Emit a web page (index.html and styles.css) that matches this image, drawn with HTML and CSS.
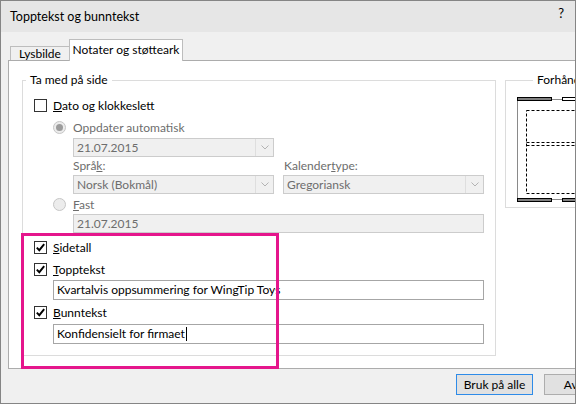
FILE: index.html
```html
<!DOCTYPE html>
<html lang="no">
<head>
<meta charset="utf-8">
<title>Topptekst og bunntekst</title>
<link rel="stylesheet" href="styles.css">
</head>
<body>
<div class="window">
  <header class="titlebar">
    <span class="title">Topptekst og bunntekst</span>
    <span class="help">?</span>
  </header>
  <div class="tabs">
    <div class="tab">Lysbilde</div>
    <div class="tab active">Notater og støtteark</div>
  </div>
  <div class="panel">
    <fieldset class="group include">
      <legend>Ta med på side</legend>
      <div class="group-body">
        <div class="row r-date"><span class="cb"></span><span class="lbl"><u>D</u>ato og klokkeslett</span></div>
        <div class="row r-auto indent1"><span class="radio on"></span><span class="lbl dis">Oppdater automatisk</span></div>
        <div class="combo c-date indent2"><span class="val">21.07.2015</span><span class="drop"><svg width="8" height="5" viewBox="0 0 8 5"><polyline points="0.5,0.5 4,4 7.5,0.5" fill="none" stroke="#b3b3b3" stroke-width="1"/></svg></span></div>
        <div class="pair labels indent2"><span class="dis">Språ<u>k</u>:</span><span class="dis">Kalender<u>t</u>ype:</span></div>
        <div class="pair combos indent2">
          <div class="combo"><span class="val">Norsk (Bokmål)</span><span class="drop"><svg width="8" height="5" viewBox="0 0 8 5"><polyline points="0.5,0.5 4,4 7.5,0.5" fill="none" stroke="#b3b3b3" stroke-width="1"/></svg></span></div>
          <div class="combo"><span class="val">Gregoriansk</span><span class="drop"><svg width="8" height="5" viewBox="0 0 8 5"><polyline points="0.5,0.5 4,4 7.5,0.5" fill="none" stroke="#b3b3b3" stroke-width="1"/></svg></span></div>
        </div>
        <div class="row r-fast indent1"><span class="radio"></span><span class="lbl dis"><u>F</u>ast</span></div>
        <div class="field disabled f-fast indent2">21.07.2015</div>
        <div class="row r-page"><span class="cb checked"><svg width="11" height="11" viewBox="0 0 11 11"><path d="M1.8 5.6 L4.3 8.2 L9.2 2.2" fill="none" stroke="#000" stroke-width="1.9"/></svg></span><span class="lbl"><u>S</u>idetall</span></div>
        <div class="row r-header"><span class="cb checked"><svg width="11" height="11" viewBox="0 0 11 11"><path d="M1.8 5.6 L4.3 8.2 L9.2 2.2" fill="none" stroke="#000" stroke-width="1.9"/></svg></span><span class="lbl"><u>T</u>opptekst</span></div>
        <div class="field f-header indent1">Kvartalvis oppsummering for WingTip Toys</div>
        <div class="row r-footer"><span class="cb checked"><svg width="11" height="11" viewBox="0 0 11 11"><path d="M1.8 5.6 L4.3 8.2 L9.2 2.2" fill="none" stroke="#000" stroke-width="1.9"/></svg></span><span class="lbl"><u>B</u>unntekst</span></div>
        <div class="field f-footer indent1">Konfidensielt for firmaet<span class="caret"></span></div>
      </div>
    </fieldset>
    <fieldset class="group preview">
      <legend>Forhåndsvisning</legend>
      <svg class="page" width="62" height="110" viewBox="0 0 62 110">
        <rect x="1.5" y="3.5" width="70" height="100" fill="#fff" stroke="#8a8a8a"/>
        <rect x="1" y="1" width="35" height="4" fill="#000"/>
        <rect x="2" y="2.5" width="33" height="1" fill="#fff"/>
        <rect x="46.5" y="1.5" width="30" height="3" fill="#fff" stroke="#000"/>
        <rect x="10.5" y="14.5" width="70" height="83" fill="none" stroke="#000" stroke-dasharray="3 2"/>
        <line x1="10.5" y1="46.5" x2="80" y2="46.5" stroke="#000" stroke-dasharray="3 2"/>
        <line x1="10.5" y1="49.5" x2="80" y2="49.5" stroke="#000" stroke-dasharray="3 2"/>
        <rect x="1" y="102" width="35" height="4" fill="#000"/>
        <rect x="2" y="103.5" width="33" height="1" fill="#fff"/>
        <rect x="46" y="102" width="30" height="4" fill="#000"/>
        <rect x="47" y="103.5" width="30" height="1" fill="#fff"/>
      </svg>
    </fieldset>
  </div>
  <div class="footer">
    <button class="btn default">Bruk på alle</button>
    <button class="btn">Avbryt</button>
  </div>
  <div class="highlight"></div>
</div>
</body>
</html>
```
FILE: styles.css
```css
html, body {
  margin: 0;
  padding: 0;
  background: #f0f0f0;
}

.window {
  width: 576px;
  height: 404px;
  box-sizing: border-box;
  border: 1px solid #858585;
  background: #f0f0f0;
  position: relative;
  overflow: hidden;
  display: flex;
  flex-direction: column;
  font-family: Lato, "Noto Sans", sans-serif;
  font-size: 12px;
  color: #000;
}

.titlebar {
  flex: none;
  height: 31px;
  background: #e6e6e6;
  display: flex;
  align-items: center;
  justify-content: space-between;
  padding: 0 11px 0 9px;
}

.title {
  font-size: 12.5px;
}

.help {
  align-self: flex-start;
  margin-top: 4px;
  font-size: 13px;
}

.tabs {
  flex: none;
  height: 21px;
  margin-top: 7px;
  padding-left: 9px;
  display: flex;
  align-items: flex-end;
  position: relative;
  z-index: 1;
}

.tab {
  box-sizing: border-box;
  height: 14px;
  width: 59px;
  border: 1px solid #bdbdbd;
  border-bottom: 0;
  border-right: 0;
  background: #f0f0f0;
  text-align: center;
  line-height: 13px;
}

.tab.active {
  height: 22px;
  width: 114px;
  margin-bottom: -1px;
  border-right: 1px solid #bdbdbd;
  background: #fff;
  line-height: 19px;
}

.panel {
  flex: none;
  height: 309px;
  box-sizing: border-box;
  margin-left: 7px;
  margin-right: -30px;
  border: 1px solid #acacac;
  background: #fff;
  padding: 11px 0 0 13px;
  display: flex;
  align-items: flex-start;
  gap: 9px;
}

.group {
  margin: 0;
  padding: 0;
  border: 1px solid #dcdcdc;
  min-width: 0;
}

.group legend {
  padding: 0 4px;
  margin-left: 3px;
  line-height: 16px;
}

.include {
  width: 474px;
  box-sizing: border-box;
  flex: none;
}

.group-body {
  padding: 8px 11px 11px 11px;
}

.preview {
  width: 120px;
  box-sizing: border-box;
  flex: none;
}

.preview legend {
  margin-left: 27px;
}

.page {
  display: block;
  margin: 8px 0 1px 10px;
}

.row {
  height: 19px;
  display: flex;
  align-items: center;
  gap: 6px;
}

.indent1 { margin-left: 19px; }
.indent2 { margin-left: 39px; }

.cb {
  flex: none;
  width: 13px;
  height: 13px;
  box-sizing: border-box;
  border: 1px solid #333;
  background: #fff;
  display: flex;
  align-items: center;
  justify-content: center;
}

.radio {
  flex: none;
  width: 13px;
  height: 13px;
  box-sizing: border-box;
  border-radius: 50%;
  border: 1px solid #c6c6c6;
  background: #ececec;
  display: flex;
  align-items: center;
  justify-content: center;
  margin-right: 1px;
}

.radio.on::after {
  content: "";
  width: 7px;
  height: 7px;
  border-radius: 50%;
  background: #9c9c9c;
}

.dis {
  color: #6d6d6d;
}

.r-auto { margin-top: 3px; }
.c-date { margin-top: 1px; }
.r-fast { margin-top: 1px; }
.r-page { margin-top: 5px; }
.r-header { margin-top: 3px; }
.f-header { margin-top: 1px; }
.r-footer { margin-top: 3px; }
.f-footer { margin-top: 2px; }

.combo {
  width: 201px;
  height: 19px;
  box-sizing: border-box;
  border: 1px solid #cccccc;
  background: #f0f0f0;
  color: #6d6d6d;
  display: flex;
  align-items: stretch;
}

.combo .val {
  flex: 1;
  padding-left: 3px;
  line-height: 17px;
}

.combo .drop {
  width: 17px;
  border-left: 1px solid #dedede;
  display: flex;
  align-items: center;
  justify-content: center;
}

.pair {
  display: grid;
  grid-template-columns: 201px 201px;
  column-gap: 9px;
}

.pair.labels {
  height: 18px;
  line-height: 18px;
}

.pair.labels span:last-child {
  padding-left: 1px;
}

.field {
  height: 20px;
  box-sizing: border-box;
  border: 1px solid #a6a6a6;
  background: #fff;
  padding-left: 3px;
  line-height: 18px;
  display: flex;
  align-items: center;
}

.field.disabled {
  height: 19px;
  border-color: #cccccc;
  background: #f0f0f0;
  color: #6d6d6d;
}

.f-fast { width: 411px; }
.f-header, .f-footer { width: 431px; }

.caret {
  display: inline-block;
  width: 1px;
  height: 14px;
  background: #000;
  margin-left: 1px;
}

.footer {
  flex: none;
  height: 34px;
  box-sizing: border-box;
  padding: 5px 0 0 455px;
  display: flex;
  align-items: flex-start;
  gap: 11px;
}

.btn {
  flex: none;
  height: 21px;
  width: 75px;
  box-sizing: border-box;
  border: 1px solid #adadad;
  background: #e1e1e1;
  font: inherit;
  color: #000;
  padding: 0;
  line-height: 19px;
}

.btn.default {
  width: 77px;
  border-color: #2e8be8;
}

.highlight {
  position: absolute;
  left: 20px;
  top: 232px;
  width: 258px;
  height: 136px;
  box-sizing: border-box;
  border: 3px solid #e5168c;
}
```
